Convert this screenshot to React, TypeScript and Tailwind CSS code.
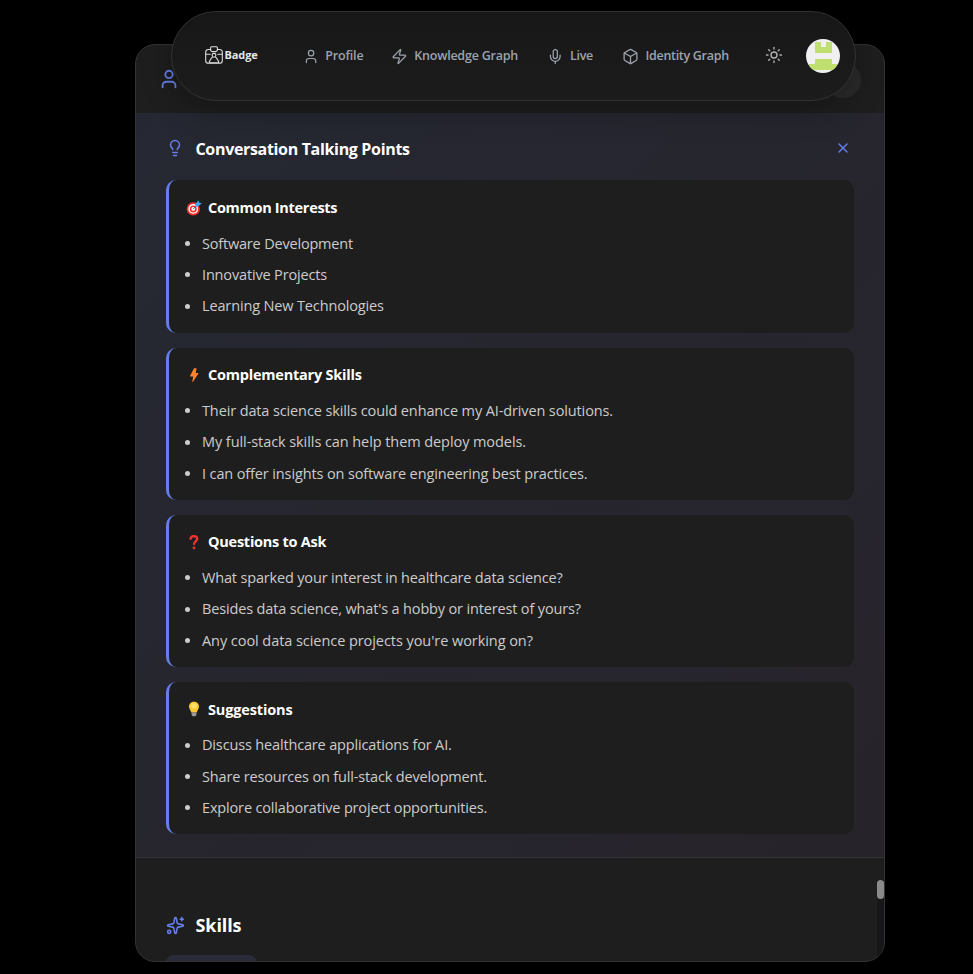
import type { ReactNode } from "react";
import { Box, Lightbulb, Mic, Sparkles, Sun, User, X, Zap } from "lucide-react";

const TargetIcon = () => (
  <svg viewBox="0 0 16 16" className="h-4 w-4">
    <circle cx="7.3" cy="8.9" r="6.6" fill="#f8312f" />
    <circle cx="7.3" cy="8.9" r="4.9" fill="#fff" />
    <circle cx="7.3" cy="8.9" r="3.5" fill="#f8312f" />
    <circle cx="7.3" cy="8.9" r="1.9" fill="#fff" />
    <path d="M7.3 8.9 11.5 4.8" stroke="#1c638f" strokeWidth="1" />
    <path d="M9.2 4.400 12.400.3l.7 2.300 2.700.7-4.100 3.500-2.500-.2z" fill="#46a4fb" />
  </svg>
);

const BoltIcon = () => (
  <svg viewBox="0 0 16 16" className="h-4 w-4">
    <path d="M8 1.2h2.6L9.7 6h2.2c.5 0 .6.4.4.7L7 14.8c-.3.4-.8.2-.7-.3l.9-5H4.500c-.4 0-.6-.3-.4-.7z" fill="#ff822d" />
  </svg>
);

const QuestionIcon = () => (
  <svg viewBox="0 0 16 16" className="h-4 w-4">
    <path d="M4.500 4.900C4.700 3 6.100 2.100 7.800 2.100c2 0 3.400 1.100 3.400 3 0 2.300-3.100 2.300-3.100 5" fill="none" stroke="#f8312f" strokeWidth="2.300" strokeLinecap="round" />
    <circle cx="8" cy="13.900" r="1.400" fill="#f8312f" />
  </svg>
);

const BulbIcon = () => (
  <svg viewBox="0 0 16 16" className="h-4 w-4">
    <path d="M8 .8c2.900 0 5 2.100 5 4.800 0 2.400-1.600 3.400-2.200 5.900H5.200C4.600 9 3 8 3 5.600 3 2.900 5.100.8 8 .8z" fill="#fcc935" />
    <path d="M8 2.200c2 0 3.300 1.300 3 3.200-.3 1.500-1.500 2-3 2s-2.700-.5-3-2C4.700 3.500 6 2.200 8 2.200z" fill="#fde266" />
    <path d="M5.600 11.500h4.800v2.300c0 .9-.8 1.500-2.400 1.500s-2.400-.6-2.400-1.500z" fill="#9b9b9b" />
  </svg>
);

const BadgeLogo = () => (
  <svg viewBox="0 0 18 18" className="mb-[3px] h-[18px] w-[18px]" fill="none" stroke="#dcdcdc" strokeWidth="1.1" strokeLinejoin="round" strokeLinecap="round">
    <path d="M5.400 3.500H3.300A2.600 2.600 0 0 0 .7 6.100v8.600a2.600 2.600 0 0 0 2.600 2.600h11.400a2.600 2.600 0 0 0 2.600-2.600V6.100a2.600 2.600 0 0 0-2.600-2.600h-2.100" />
    <path d="M5.600 1.700c0-.6.400-1 1-1h4.800c.6 0 1 .4 1 1v2.600L11 5.600H7L5.600 4.300z" />
    <path d="M.8 8.300h4.400M12.800 8.300h4.400" />
    <circle cx="9" cy="9.300" r="1.900" />
    <path d="M7.300 11.200C6 12 5.300 13.700 4.300 15.700c-.3.600 0 1 .6 1h8.200c.6 0 .9-.4.600-1-1-2-1.700-3.700-3-4.500" />
  </svg>
);

const Avatar = () => (
  <div className="h-[34px] w-[34px] overflow-hidden rounded-full bg-[#f0f0f0]">
    <svg viewBox="0 0 34 34" className="h-full w-full" fill="#bfe06e" shapeRendering="crispEdges">
      <path d="M8.500 3h6v5h5V3h6v11h-17z" />
      <path d="M8.500 19.500h17V25h5.500v5.500H3V25h5.500z" />
    </svg>
  </div>
);

type Point = { text: string; tracking: string };
type Section = { title: string; tracking: string; icon: ReactNode; points: Point[] };

const sections: Section[] = [
  {
    title: "Common Interests",
    tracking: "tracking-[-0.3px]",
    icon: <TargetIcon />,
    points: [
      { text: "Software Development", tracking: "tracking-[-0.19px]" },
      { text: "Innovative Projects", tracking: "tracking-[-0.16px]" },
      { text: "Learning New Technologies", tracking: "tracking-[-0.14px]" },
    ],
  },
  {
    title: "Complementary Skills",
    tracking: "tracking-[-0.22px]",
    icon: <BoltIcon />,
    points: [
      { text: "Their data science skills could enhance my AI-driven solutions.", tracking: "tracking-[-0.122px]" },
      { text: "My full-stack skills can help them deploy models.", tracking: "tracking-[-0.075px]" },
      { text: "I can offer insights on software engineering best practices.", tracking: "tracking-[-0.124px]" },
    ],
  },
  {
    title: "Questions to Ask",
    tracking: "tracking-[-0.25px]",
    icon: <QuestionIcon />,
    points: [
      { text: "What sparked your interest in healthcare data science?", tracking: "tracking-[-0.168px]" },
      { text: "Besides data science, what's a hobby or interest of yours?", tracking: "tracking-[-0.155px]" },
      { text: "Any cool data science projects you're working on?", tracking: "tracking-[-0.06px]" },
    ],
  },
  {
    title: "Suggestions",
    tracking: "tracking-[-0.15px]",
    icon: <BulbIcon />,
    points: [
      { text: "Discuss healthcare applications for AI.", tracking: "tracking-[-0.155px]" },
      { text: "Share resources on full-stack development.", tracking: "tracking-[-0.16px]" },
      { text: "Explore collaborative project opportunities.", tracking: "tracking-[-0.157px]" },
    ],
  },
];

function TalkingCard({ section }: { section: Section }) {
  return (
    <section className="h-[152.2px] rounded-[10px] border-l-[3px] border-[#667eea] bg-[#1e1e1e] px-[15px] pt-[14.5px]">
      <h4 className={`flex h-[26px] items-center gap-[6.5px] pl-[1.5px] text-[14.5px] font-bold text-white ${section.tracking}`}>
        {section.icon}
        {section.title}
      </h4>
      <ul className="mt-[10.7px] flex flex-col gap-[7.4px]">
        {section.points.map((p) => (
          <li key={p.text} className={`flex h-6 items-center whitespace-nowrap text-[14.5px] text-[#cccccc] ${p.tracking}`}>
            <span className="mr-3 ml-px h-[5px] w-[5px] rounded-full bg-[#cccccc]" />
            {p.text}
          </li>
        ))}
      </ul>
    </section>
  );
}

function NavItem({ icon, label, className }: { icon: ReactNode; label: string; className: string }) {
  return (
    <a className={`flex items-center gap-[6.5px] whitespace-nowrap text-[12.5px] font-semibold text-[#9ca3af] ${className}`}>
      {icon}
      {label}
    </a>
  );
}

export default function App() {
  return (
    <div className="relative h-[974px] w-[973px] overflow-hidden bg-black pt-[44px] pl-[135px] font-['Open_Sans','Noto_Sans',sans-serif]">
      <main className="relative flex h-[918px] w-[750px] flex-col overflow-hidden rounded-[20px] border border-[#333333] bg-[#1e1e1e]">
        <header className="flex h-[68px] shrink-0 items-center justify-between pr-[23px] pl-[22px]">
          <User size={22} color="#667eea" />
          <div className="mt-0.5 h-9 w-9 rounded-full bg-[#2a2a2a]" />
        </header>

        <div className="h-[745px] shrink-0 border-b border-[#333333] bg-linear-135 from-[#252832] to-[#27232b] px-[30px]">
          <div className="flex h-[67.4px] items-center pt-[3px]">
            <Lightbulb size={18} color="#667eea" />
            <h3 className="mt-[2px] ml-[11.5px] flex-1 text-[16px] font-bold tracking-[-0.33px] text-white">Conversation Talking Points</h3>
            <X size={16} color="#667eea" className="mr-[3.5px]" />
          </div>
          <div className="flex flex-col gap-[15px]">
            {sections.map((s) => (
              <TalkingCard key={s.title} section={s} />
            ))}
          </div>
        </div>

        <div className="px-[30px] pt-[52px]">
          <div className="flex h-[30px] items-center">
            <Sparkles size={19} color="#667eea" className="-ml-[0.5px]" />
            <h3 className="ml-[11px] text-[18px] font-bold tracking-[-0.1px] text-white">Skills</h3>
          </div>
          <div className="mt-[15px] h-8 w-[91px] rounded-lg bg-[#292b3a]" />
        </div>

        <div className="absolute top-[835px] right-0 bottom-0 w-[7px] bg-[#17171a]">
          <div className="h-[19px] rounded-full bg-[#8a8a8a]" />
        </div>
      </main>

      <nav className="absolute top-[11px] left-[171px] flex h-[90px] w-[685px] items-center rounded-full border border-[#303030] bg-linear-to-b from-[#171717] to-[#1c1c1c] pl-[33px] shadow-[0_8px_32px_rgba(0,0,0,0.3)]">
        <BadgeLogo />
        <span className="mb-[2px] ml-[1.5px] w-[35.5px] text-[11px] font-bold tracking-[-0.1px] text-[#e5e5e5]">Badge</span>
        <NavItem className="ml-[42.5px] w-[61px] tracking-[-0.15px]" icon={<User size={17} strokeWidth={1.8} />} label="Profile" />
        <NavItem className="ml-[27.5px] w-[127px] tracking-[-0.22px]" icon={<Zap size={17} strokeWidth={1.8} />} label="Knowledge Graph" />
        <NavItem className="ml-[29px] w-[46px] tracking-[-0.3px]" icon={<Mic size={17} strokeWidth={1.8} />} label="Live" />
        <NavItem className="ml-[29px] w-[107px] tracking-[-0.3px]" icon={<Box size={17} strokeWidth={1.8} />} label="Identity Graph" />
        <Sun size={18} color="#b0b0b0" strokeWidth={1.8} className="mb-[2px] ml-[35.5px]" />
        <div className="mb-px ml-[23.5px]">
          <Avatar />
        </div>
      </nav>
    </div>
  );
}
